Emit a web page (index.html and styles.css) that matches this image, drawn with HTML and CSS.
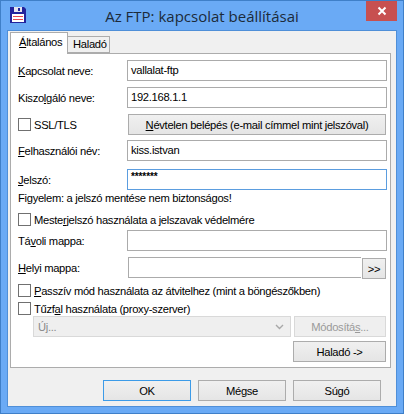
FILE: index.html
```html
<!DOCTYPE html>
<html lang="hu">
<head>
    <meta charset="UTF-8">
    <title>Az FTP: kapcsolat beállításai</title>
    <link rel="stylesheet" href="styles.css">
</head>
<body>
    <div class="window">
        <div class="titlebar">
            <svg class="app-icon" width="16" height="16" viewBox="0 0 16 16">
                <path d="M0 0H14L16 2V16H0Z" fill="#23239c"/>
                <rect x="4" y="0" width="8" height="5" fill="#e4e4ee"/>
                <rect x="8" y="1" width="2" height="3" fill="#23239c"/>
                <rect x="2" y="7" width="12" height="8" fill="#fff"/>
                <rect x="3" y="9" width="10" height="1" fill="#e8484f"/>
                <rect x="3" y="12" width="10" height="1" fill="#e8484f"/>
            </svg>
            <div class="title">Az FTP: kapcsolat beállításai</div>
            <div class="close">
                <svg width="10" height="10" viewBox="0 0 10 10">
                    <path d="M1.5 1.5L8.5 8.5M8.5 1.5L1.5 8.5" stroke="#fff" stroke-width="2"/>
                </svg>
            </div>
        </div>
        <div class="client">
            <div class="tabs">
                <div class="tab active"><u>Á</u>ltalános</div>
                <div class="tab">Haladó</div>
            </div>
            <div class="panel">
                <div class="row">
                    <span class="label"><u>K</u>apcsolat neve:</span>
                    <div class="field">vallalat-ftp</div>
                </div>
                <div class="row">
                    <span class="label">Kiszo<u>l</u>gáló neve:</span>
                    <div class="field">192.168.1.1</div>
                </div>
                <div class="row row-ssl">
                    <label class="check label"><span class="box"></span>SSL/TLS</label>
                    <div class="btn btn-anon"><span><u>N</u>évtelen belépés (e-mail címmel mint jelszóval)</span></div>
                </div>
                <div class="row row-user">
                    <span class="label"><u>F</u>elhasználói név:</span>
                    <div class="field">kiss.istvan</div>
                </div>
                <div class="row row-pass">
                    <span class="label"><u>J</u>elszó:</span>
                    <div class="field focus"><span class="stars">*******</span></div>
                </div>
                <p class="warn">Figyelem: a jelszó mentése nem biztonságos!</p>
                <label class="check check-master"><span class="box"></span>Meste<u>r</u>jelszó használata a jelszavak védelmére</label>
                <div class="row row-remote">
                    <span class="label">Tá<u>v</u>oli mappa:</span>
                    <div class="field"></div>
                </div>
                <div class="row row-local">
                    <span class="label"><u>H</u>elyi mappa:</span>
                    <div class="field"></div>
                    <div class="btn btn-browse">&gt;&gt;</div>
                </div>
                <label class="check check-passive"><span class="box"></span><span><u>P</u>asszív mód használata az átvitelhez (mint a böngészőkben)</span></label>
                <label class="check check-firewall"><span class="box"></span>Tűzf<u>a</u>l használata (proxy-szerver)</label>
                <div class="row row-proxy">
                    <div class="combo">
                        <span>Új...</span>
                        <svg width="9" height="6" viewBox="0 0 9 6"><path d="M1 1L4.5 4.5L8 1" fill="none" stroke="#a8a8a8" stroke-width="1.4"/></svg>
                    </div>
                    <div class="btn disabled">Módosítá<u>s</u>...</div>
                </div>
                <div class="btn btn-advanced">Haladó -&gt;</div>
            </div>
            <div class="actions">
                <div class="btn btn-action default">OK</div>
                <div class="btn btn-action">Mégse</div>
                <div class="btn btn-action">Súgó</div>
            </div>
        </div>
    </div>
</body>
</html>
```
FILE: styles.css
```css
* {
    box-sizing: border-box;
}

body {
    margin: 0;
    width: 404px;
    height: 414px;
    overflow: hidden;
    font-family: "Liberation Sans", Arial, sans-serif;
    font-size: 11.2px;
    letter-spacing: -0.3px;
    color: #000;
}

u {
    text-underline-offset: 1px;
}

.window {
    height: 414px;
    background-color: #6aaaf5;
    border: 1px solid #3f7fc8;
    display: flex;
    flex-direction: column;
}

.titlebar {
    height: 29px;
    padding-left: 9px;
    display: flex;
    align-items: flex-start;
    flex-shrink: 0;
}

.app-icon {
    margin-top: 6px;
    flex-shrink: 0;
}

.title {
    flex-grow: 1;
    text-align: center;
    font-family: "Open Sans", sans-serif;
    font-size: 15px;
    letter-spacing: 0;
    line-height: 30px;
    color: #1c2a3a;
    padding-left: 12px;
}

.close {
    width: 31px;
    height: 20px;
    margin-right: 6px;
    background-color: #c75050;
    display: flex;
    align-items: center;
    justify-content: center;
}

.client {
    flex-grow: 1;
    margin: 0 6px 6px 6px;
    background-color: #f0f0f0;
    border: 1px solid #4f8fd8;
    padding: 2px 4px 0 2px;
    display: flex;
    flex-direction: column;
}

.tabs {
    display: flex;
    align-items: flex-end;
    height: 20px;
    position: relative;
    z-index: 1;
}

.tab {
    height: 17px;
    padding: 0 5px;
    line-height: 15px;
    background-color: #f0f0f0;
    border: 1px solid #acacac;
    border-left: 0;
    width: 42px;
}

.tab.active {
    height: 22px;
    width: 58px;
    margin-bottom: -1px;
    padding: 2px 0 0 8px;
    background-color: #fff;
    border: 1px solid #acacac;
    border-bottom: 0;
}

.panel {
    height: 315px;
    width: 381px;
    background-color: #fff;
    border: 1px solid #acacac;
    padding: 6px 3px 0 7px;
}

.row {
    display: flex;
    align-items: center;
    height: 21px;
    margin-bottom: 6px;
}

.label {
    width: 109px;
    flex-shrink: 0;
}

.field {
    flex-grow: 1;
    height: 21px;
    border: 1px solid #ababab;
    background-color: #fff;
    padding: 0 3px;
    line-height: 18px;
}

.field.focus {
    border-color: #5b9ddf;
}

.stars {
    font-size: 10px;
    font-weight: bold;
    letter-spacing: -0.1px;
    line-height: 14px;
    display: block;
}

.check {
    display: flex;
    align-items: center;
    height: 13px;
}

.box {
    width: 13px;
    height: 13px;
    border: 1px solid #707070;
    background-color: #fff;
    margin-right: 3px;
    flex-shrink: 0;
}

.btn {
    height: 21px;
    border: 1px solid #acacac;
    background-color: #e6e6e6;
    background-image: linear-gradient(#f0f0f0, #e5e5e5);
    display: flex;
    align-items: center;
    justify-content: center;
    white-space: nowrap;
}

.btn-anon {
    flex-grow: 1;
    margin-left: 1px;
    margin-right: 1px;
}

.row-ssl .check {
    height: 21px;
}

.row-user {
    margin-top: -1px;
    margin-bottom: 8px;
}

.row-pass {
    margin-bottom: 0;
}

.warn {
    margin: 0;
    height: 17px;
    line-height: 17px;
}

.check-master {
    margin-top: 6px;
    margin-bottom: 4px;
}

.row-local .label {
    width: 110px;
}

.row-local .field {
    flex-grow: 0;
    width: 233px;
    border-right: 0;
}

.btn-browse {
    width: 24px;
    margin-left: 1px;
    margin-top: 2px;
}

.check-passive {
    margin-bottom: 5px;
}

.check-firewall {
    margin-bottom: 1px;
}

.row-proxy {
    margin-bottom: 4px;
    padding-left: 15px;
    gap: 3px;
}

.combo {
    width: 258px;
    height: 21px;
    border: 1px solid #d9d9d9;
    background-color: #efefef;
    color: #8a8a8a;
    padding: 0 6px 0 4px;
    display: flex;
    align-items: center;
    justify-content: space-between;
}

.btn.disabled {
    width: 92px;
    background-image: none;
    background-color: #efefef;
    border-color: #d9d9d9;
    color: #9a9a9a;
}

.btn-advanced {
    width: 93px;
    margin-left: 275px;
}

.actions {
    display: flex;
    justify-content: flex-end;
    gap: 7px;
    padding-top: 12px;
    padding-right: 11px;
}

.btn-action {
    width: 88px;
}

.btn.default {
    border-color: #3c9be8;
}
```
